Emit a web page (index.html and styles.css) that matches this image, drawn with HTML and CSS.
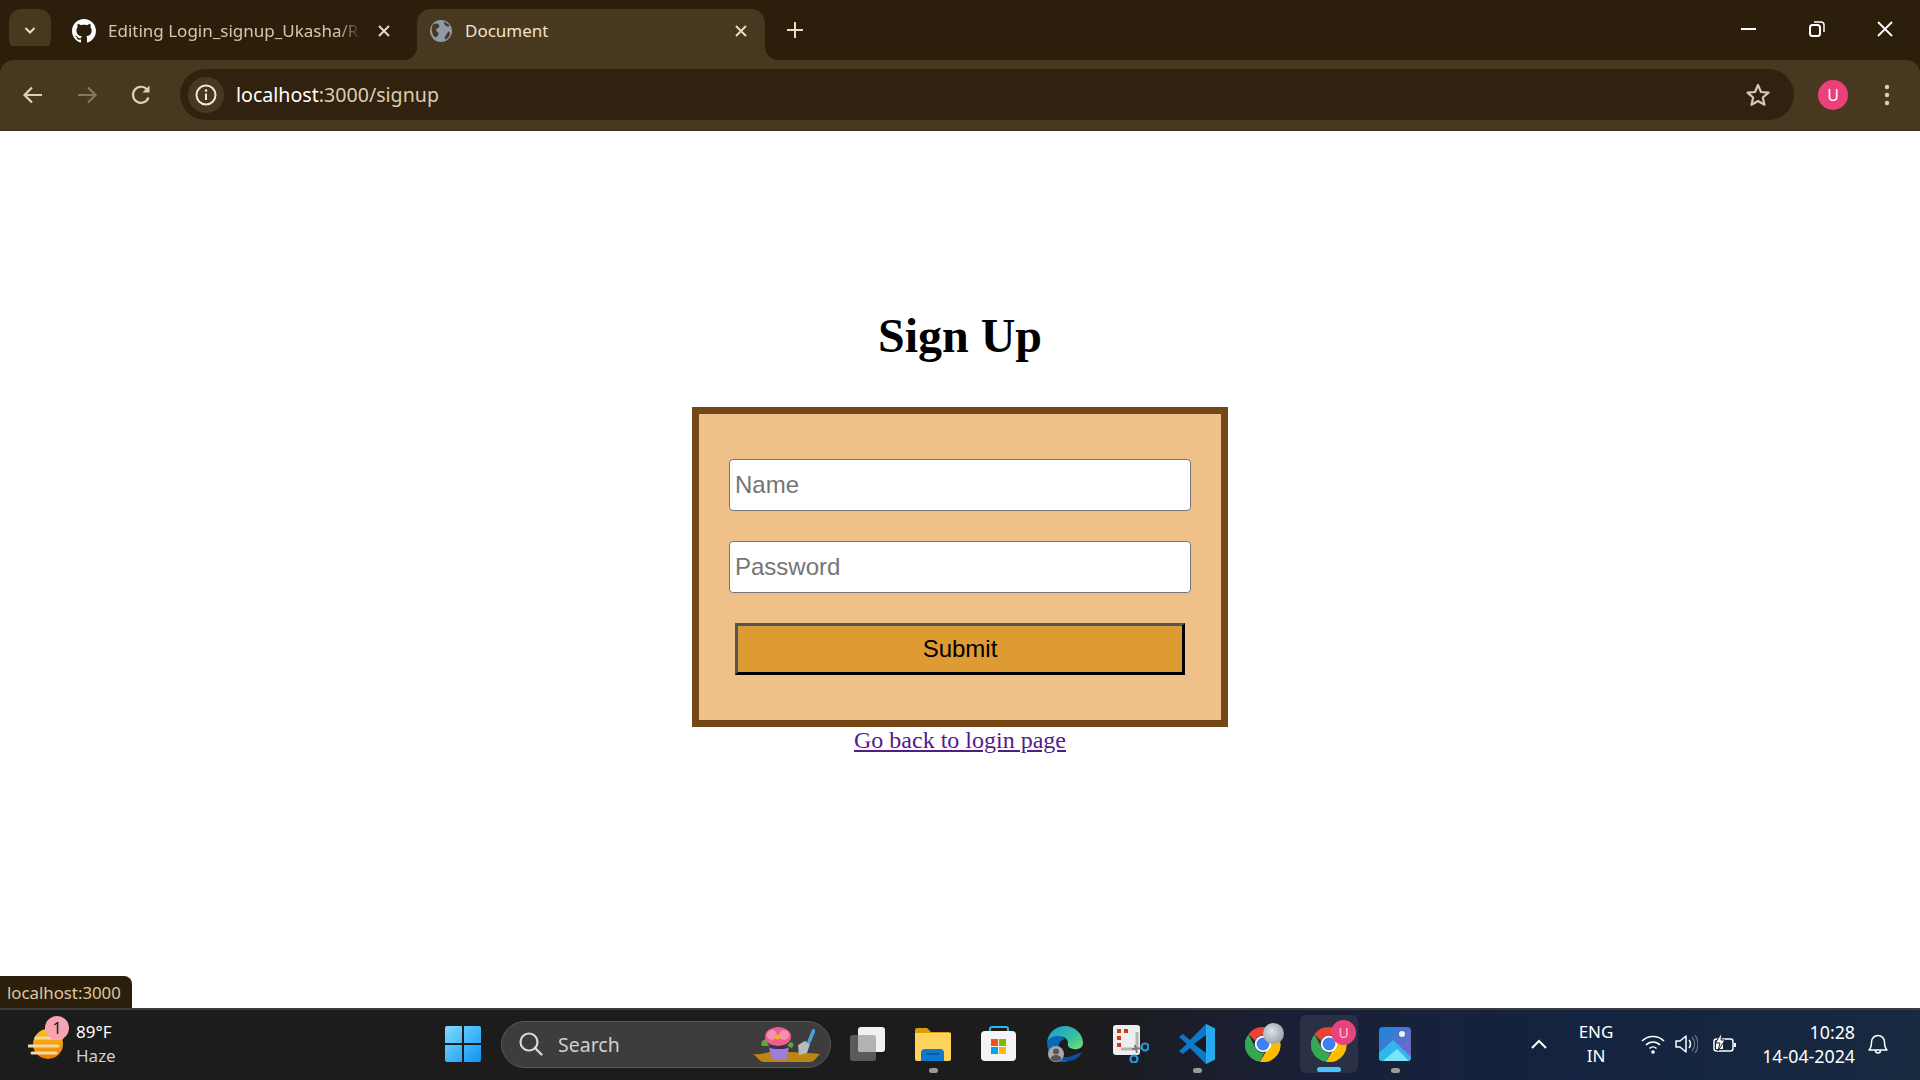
FILE: index.html
```html
<!DOCTYPE html>
<html>

<head>
    <title>Document</title>
    <link rel="stylesheet" href="styles.css">
</head>

<body>
    <svg class="defs" width="0" height="0">
        <defs>
            <symbol id="chrome-logo" viewBox="0 0 36 36">
                <path fill="#ea4335" d="M18 1a17 17 0 0 1 14.7 8.5H18a8.5 8.5 0 0 0-8 5.6L3.6 8.2A17 17 0 0 1 18 1z" />
                <path fill="#34a853" d="M3.6 8.2l7.2 14.3a8.5 8.5 0 0 0 8.6 4l-4.4 9.2A17 17 0 0 1 3.6 8.2z" />
                <path fill="#fbbc04" d="M32.7 9.5A17 17 0 0 1 15 35.7l7.5-13a8.5 8.5 0 0 0-1-11.2z" />
                <circle cx="18" cy="18" r="8.3" fill="#fff" />
                <circle cx="18" cy="18" r="6.4" fill="#3b82f0" />
            </symbol>
        </defs>
    </svg>

    <!-- tab strip -->
    <div class="tabstrip">
        <button class="tab-search">
            <svg width="14" height="14" viewBox="0 0 14 14"><path d="M2.5 5l4.5 4.5L11.500 5" fill="none" stroke="#eadcc2" stroke-width="2" /></svg>
        </button>
        <div class="tab">
            <svg class="tab-icon" viewBox="0 0 16 16"><path fill="#fff" d="M8 0C3.58 0 0 3.58 0 8c0 3.54 2.29 6.53 5.47 7.59.4.07.55-.17.55-.38 0-.19-.01-.82-.01-1.49-2.01.37-2.53-.49-2.69-.94-.09-.23-.48-.94-.82-1.13-.28-.15-.68-.52-.01-.53.63-.01 1.08.58 1.23.82.72 1.21 1.87.87 2.33.66.07-.52.28-.87.51-1.07-1.78-.2-3.64-.89-3.64-3.95 0-.87.31-1.59.82-2.15-.08-.2-.36-1.02.08-2.12 0 0 .67-.21 2.2.82.64-.18 1.32-.27 2-.27.68 0 1.36.09 2 .27 1.53-1.04 2.2-.82 2.2-.82.44 1.1.16 1.92.08 2.12.51.56.82 1.27.82 2.15 0 3.07-1.87 3.75-3.65 3.95.29.25.54.73.54 1.48 0 1.07-.01 1.93-.01 2.2 0 .21.15.46.55.38A8.013 8.013 0 0016 8c0-4.42-3.58-8-8-8z" /></svg>
            <span class="tab-title tab-title-faded">Editing Login_signup_Ukasha/R</span>
            <svg class="tab-close" viewBox="0 0 14 14"><path d="M2 2l10 10M12 2L2 12" stroke="#eadcc2" stroke-width="2" /></svg>
        </div>
        <div class="tab tab-active">
            <svg class="tab-icon" viewBox="0 0 24 24">
                <circle cx="12" cy="12" r="11" fill="#8f9aa6" />
                <path fill="#4a3921" d="M4 5.500c2.500-1.500 5-1 6 .5 1 1.800-.5 3-2 3.500-1.500.5-1 2.500.5 3.500s1.500 3-.5 4.500c-1 .7-1.800 1-2.500.5C3 15 1.500 9 4 5.500zM15 3c2 .5 4.500 2 5.500 4-1.500 1-3.500.5-4.500-1s-1.500-2-1-3zM20 12.500c1 .5 1 2.500.5 4-1 2-2.500 3.500-4 4-1-1-1-3 .5-4.500s1.500-3.500 3-3.500z" />
            </svg>
            <span class="tab-title">Document</span>
            <svg class="tab-close" viewBox="0 0 14 14"><path d="M2 2l10 10M12 2L2 12" stroke="#eadcc2" stroke-width="2" /></svg>
        </div>
        <svg class="new-tab" width="16" height="16" viewBox="0 0 16 16"><path d="M8 0v16M0 8h16" stroke="#eadcc2" stroke-width="2" /></svg>
        <div class="window-controls">
            <button class="window-btn">
                <svg width="16" height="16" viewBox="0 0 16 16"><path d="M0 8h15" stroke="#fff" stroke-width="2" /></svg>
            </button>
            <button class="window-btn">
                <svg width="16" height="16" viewBox="0 0 16 16"><rect x="1" y="4" width="10" height="11" rx="2.500" fill="none" stroke="#fff" stroke-width="2" /><path d="M5 1h6.500A3 3 0 0 1 15 4v7" fill="none" stroke="#fff" stroke-width="1.500" /></svg>
            </button>
            <button class="window-btn">
                <svg width="16" height="16" viewBox="0 0 16 16"><path d="M1 1l14 14M15 1L1 15" stroke="#fff" stroke-width="1.800" /></svg>
            </button>
        </div>
    </div>

    <!-- toolbar -->
    <div class="toolbar">
        <button class="nav-btn">
            <svg width="24" height="24" viewBox="0 0 24 24"><path d="M21 12H4M11 4.500L3.500 12l7.500 7.500" fill="none" stroke="#e0d0b3" stroke-width="2.200" /></svg>
        </button>
        <button class="nav-btn">
            <svg width="24" height="24" viewBox="0 0 24 24"><path d="M3 12h17M13 4.500l7.500 7.500-7.500 7.500" fill="none" stroke="#84775f" stroke-width="2.200" /></svg>
        </button>
        <button class="nav-btn">
            <svg width="24" height="24" viewBox="0 0 24 24"><path d="M19.500 14.500A8 8 0 1 1 18 6.500" fill="none" stroke="#e0d0b3" stroke-width="2.200" /><path d="M20.500 2.500v7h-7z" fill="#e0d0b3" /></svg>
        </button>
        <div class="omnibox">
            <div class="site-info">
                <svg width="22" height="22" viewBox="0 0 22 22"><circle cx="11" cy="11" r="9.500" fill="none" stroke="#f3e8d3" stroke-width="2" /><path d="M11 9.500v6.500" stroke="#f3e8d3" stroke-width="2" /><circle cx="11" cy="6.500" r="1.300" fill="#f3e8d3" /></svg>
            </div>
            <span class="url"><span class="url-host">localhost</span>:3000/signup</span>
            <svg class="star" width="26" height="26" viewBox="0 0 26 26"><path d="M13 3l3 7 7.500.6-5.700 4.900 1.700 7.300L13 19l-6.500 3.800 1.700-7.300L2.500 10.600 10 10z" fill="none" stroke="#d2c8b8" stroke-width="2.200" stroke-linejoin="round" /></svg>
        </div>
        <div class="nav-btn">
            <div class="avatar">U</div>
        </div>
        <button class="nav-btn">
            <svg width="6" height="24" viewBox="0 0 6 24"><circle cx="3" cy="4" r="2.200" fill="#e0d0b3" /><circle cx="3" cy="12" r="2.200" fill="#e0d0b3" /><circle cx="3" cy="20" r="2.200" fill="#e0d0b3" /></svg>
        </button>
    </div>

    <!-- page -->
    <main class="page">
        <h1 class="page-title">Sign Up</h1>
        <form class="signup-form">
            <input class="field" type="text" placeholder="Name">
            <input class="field" type="password" placeholder="Password">
            <input class="submit-btn" type="submit" value="Submit">
        </form>
        <a class="back-link" href="#">Go back to login page</a>
        <div class="status-bubble">localhost:3000</div>
    </main>

    <!-- taskbar -->
    <footer class="taskbar">
        <div class="weather">
            <div class="weather-icon">
                <svg width="40" height="34" viewBox="0 0 40 34">
                    <defs><linearGradient id="sun" x1="0" y1="0" x2="0" y2="1"><stop offset="0" stop-color="#fcc419" /><stop offset="1" stop-color="#ee7a05" /></linearGradient></defs>
                    <circle cx="20" cy="17" r="15" fill="url(#sun)" />
                    <path d="M8 11h26M0 19h30M4 26h24" stroke="#f3d9a0" stroke-width="3" stroke-linecap="round" />
                </svg>
                <span class="weather-badge">1</span>
            </div>
            <div class="weather-text">
                <span class="weather-temp">89°F</span>
                <span class="weather-desc">Haze</span>
            </div>
        </div>

        <div class="task-icons">
            <div class="task-item task-start">
                <svg width="36" height="36" viewBox="0 0 36 36">
                    <defs><linearGradient id="win" x1="0" y1="0" x2="1" y2="1"><stop offset="0" stop-color="#7fdcff" /><stop offset="1" stop-color="#0d93f5" /></linearGradient></defs>
                    <path fill="url(#win)" d="M2 0h15v17H0V2a2 2 0 0 1 2-2zM19 0h15a2 2 0 0 1 2 2v15H19zM0 19h17v17H2a2 2 0 0 1-2-2zM19 19h17v15a2 2 0 0 1-2 2H19z" />
                </svg>
            </div>
            <div class="search-box">
                <svg width="26" height="26" viewBox="0 0 26 26"><circle cx="11" cy="11" r="8.500" fill="none" stroke="#d8d8d8" stroke-width="2.200" /><path d="M17 17l6.500 6.500" stroke="#d8d8d8" stroke-width="2.400" stroke-linecap="round" /></svg>
                <span class="search-label">Search</span>
                <svg class="search-art" width="68" height="35" viewBox="0 0 68 35">
                    <path d="M0 27c7 1 12-1 16-2h20c10 0 20 1 31 2-3 3-6 8-10 8H11C7 35 4 30 0 27z" fill="#bb8614" />
                    <path d="M45 18l7-4 5 3-3 9-8 2z" fill="#b7bcc0" />
                    <path d="M54 15l5-12c1-2 4-1 3 2l-5 12z" fill="#4aa3e0" />
                    <path d="M9 19c-2-4 1-6 4-7l3 7zM37 15c3 0 5 2 2 6l-5-2z" fill="#58a83a" />
                    <path d="M16 20h20l-2.500 13H19z" fill="#a07bd8" />
                    <ellipse cx="26" cy="20" rx="10" ry="2" fill="#3c2d52" />
                    <ellipse cx="25" cy="9.500" rx="13" ry="9.500" fill="#ee5f8e" />
                    <circle cx="19" cy="8" r="5" fill="#f68fb0" />
                    <circle cx="31" cy="8" r="5" fill="#f68fb0" />
                    <circle cx="25" cy="10" r="2.500" fill="#f3b21b" />
                </svg>
            </div>
            <div class="task-list">
                <div class="task-item">
                    <svg width="36" height="36" viewBox="0 0 36 36">
                        <rect x="1" y="9" width="26" height="26" rx="3" fill="#5b5b5b" />
                        <rect x="9" y="1" width="27" height="25" rx="3" fill="#f1f1f1" />
                        <path d="M9 9h15a3 3 0 0 1 3 3v14H12a3 3 0 0 1-3-3z" fill="#b2b2b2" />
                    </svg>
                </div>
                <div class="task-item task-open">
                    <svg width="36" height="34" viewBox="0 0 36 34">
                        <path d="M0 3a2 2 0 0 1 2-2h10l4 4h18a2 2 0 0 1 2 2v6H0z" fill="#d79f0a" />
                        <path d="M0 6h36v26a2 2 0 0 1-2 2H2a2 2 0 0 1-2-2z" fill="#fdd35e" />
                        <path d="M6 34v-8a4 4 0 0 1 4-4h15a4 4 0 0 1 4 4v8z" fill="#0c78d0" />
                        <path d="M11 27h13" stroke="#0a4f92" stroke-width="1.500" />
                    </svg>
                </div>
                <div class="task-item">
                    <svg width="36" height="36" viewBox="0 0 36 36">
                        <path d="M9 6V3a2 2 0 0 1 2-2h14a2 2 0 0 1 2 2v3" fill="none" stroke="#29b6f0" stroke-width="2" />
                        <rect x="0" y="5" width="35" height="30" rx="4" fill="#f4f4f4" />
                        <rect x="10" y="13" width="7" height="7" fill="#e8531f" />
                        <rect x="18" y="13" width="7" height="7" fill="#7fb900" />
                        <rect x="10" y="21" width="7" height="7" fill="#00a2ed" />
                        <rect x="18" y="21" width="7" height="7" fill="#ffb900" />
                    </svg>
                </div>
                <div class="task-item">
                    <svg width="36" height="36" viewBox="0 0 36 36">
                        <defs><linearGradient id="edge" x1="0" y1="0" x2="1" y2="1"><stop offset="0" stop-color="#1b9ad8" /><stop offset="0.6" stop-color="#35c1a0" /><stop offset="1" stop-color="#7fe06a" /></linearGradient></defs>
                        <path d="M0 16C2 5 10 0 18 0c10 0 18 8 18 17 0 5-5 7-10 6-4-1-6-3-5-6 0-4-4-7-9-6S1 13 0 16z" fill="url(#edge)" />
                        <path d="M0 16c2-4 6-6 10-6 3 0 6 1 8 3-5 1-7 5-6 10 0 5 4 10 10 12-3 1-5 1-7 1C7 36 0 27 0 16z" fill="#0b66b8" />
                        <path d="M35 26c-3 6-8 9-13 9-4 0-7-2-9-5 5 2 10 1 14-1 3-1 6-2 8-3z" fill="#0a4f9c" />
                        <circle cx="9" cy="28" r="8" fill="#a8a8a8" />
                        <circle cx="9" cy="25.500" r="3" fill="#555" />
                        <path d="M3.500 33c1-3 3-4 5.500-4s4.500 1 5.500 4a8 8 0 0 1-11 0z" fill="#555" />
                    </svg>
                </div>
                <div class="task-item">
                    <svg width="36" height="38" viewBox="0 0 36 38">
                        <rect x="0" y="0" width="27" height="30" rx="3" fill="#eeeeee" />
                        <rect x="4" y="4" width="4" height="4" fill="#cf3a13" />
                        <rect x="11" y="4" width="4" height="4" fill="#cf3a13" />
                        <rect x="4" y="11" width="4" height="4" fill="#cf3a13" />
                        <rect x="4" y="18" width="4" height="4" fill="#cf3a13" />
                        <path d="M8 24h13a3 3 0 0 0 3-3V7" fill="none" stroke="#b4b4b4" stroke-width="3" />
                        <path d="M22 20l2 8M19 24l11-1" stroke="#777" stroke-width="2" />
                        <circle cx="21" cy="34" r="3.500" fill="none" stroke="#2996d8" stroke-width="2.200" />
                        <circle cx="32" cy="22" r="3.500" fill="none" stroke="#2996d8" stroke-width="2.200" />
                    </svg>
                </div>
                <div class="task-item task-open">
                    <svg width="36" height="40" viewBox="0 0 36 40">
                        <path d="M27 0l9 4.500v31L27 40 11 24l-7 6-4-3 8-7-8-7 4-3 7 6z" fill="#0c78c8" />
                        <path d="M27 0l9 4.500v31L27 40z" fill="#29a8ee" />
                        <path d="M27 11L15 20l12 9z" fill="#1a1a1a" />
                    </svg>
                </div>
                <div class="task-item">
                    <div class="chrome-wrap">
                        <svg class="chrome" viewBox="0 0 36 36"><use href="#chrome-logo" /></svg>
                        <span class="chrome-badge chrome-badge-grey"></span>
                    </div>
                </div>
                <div class="task-item task-active">
                    <div class="chrome-wrap">
                        <svg class="chrome" viewBox="0 0 36 36"><use href="#chrome-logo" /></svg>
                        <span class="chrome-badge">U</span>
                    </div>
                </div>
                <div class="task-item task-open">
                    <svg width="32" height="34" viewBox="0 0 32 34">
                        <defs><linearGradient id="photo" x1="0" y1="0" x2="1" y2="1"><stop offset="0" stop-color="#1388dc" /><stop offset="1" stop-color="#8a5fc4" /></linearGradient></defs>
                        <rect width="32" height="34" rx="4" fill="url(#photo)" />
                        <circle cx="23" cy="7" r="3" fill="#f1f1f1" />
                        <path d="M0 26l14-13 18 17v1a3 3 0 0 1-3 3H3a3 3 0 0 1-3-3z" fill="#2fb8ee" />
                        <path d="M4 34l14-12 12 12z" fill="#7be4f7" />
                    </svg>
                </div>
            </div>
        </div>

        <div class="tray">
            <svg class="tray-icon" viewBox="0 0 24 24"><path d="M5 16l7-7 7 7" fill="none" stroke="#fff" stroke-width="2" /></svg>
            <div class="tray-lang"><span>ENG</span><span>IN</span></div>
            <svg class="tray-icon tray-wifi" viewBox="0 0 24 24"><path d="M1 9c6-6 16-6 22 0M5 13c4-4 10-4 14 0M8.500 16.500c2-2 5-2 7 0" fill="none" stroke="#fff" stroke-width="1.600" /><circle cx="12" cy="20" r="1.800" fill="#fff" /></svg>
            <svg class="tray-icon tray-volume" viewBox="0 0 24 24"><path d="M2 9h4l6-5v16l-6-5H2z" fill="none" stroke="#fff" stroke-width="1.500" stroke-linejoin="round" /><path d="M15 8c2 2 2 6 0 8" fill="none" stroke="#fff" stroke-width="1.500" /><path d="M18 5c3.500 4 3.500 10 0 14M21 3c4 5 4 13 0 18" fill="none" stroke="#6d7688" stroke-width="1.200" /></svg>
            <svg class="tray-icon tray-battery" viewBox="0 0 24 24"><rect x="1" y="7" width="19" height="12" rx="2.500" fill="none" stroke="#fff" stroke-width="1.500" /><path d="M22 11v4" stroke="#fff" stroke-width="2" /><rect x="3" y="9" width="7" height="8" fill="#fff" /><path d="M9 0L2.500 11H7l-2 8 7-11H8z" fill="#fff" stroke="#16243c" /></svg>
            <div class="clock"><span>10:28</span><span>14-04-2024</span></div>
            <svg class="tray-icon tray-bell" viewBox="0 0 24 24"><path d="M3 18c2-2 2.500-4 2.500-8a6.500 6.500 0 0 1 13 0c0 4 .5 6 2.500 8zM9.500 18.500a2.500 2.500 0 0 0 5 0" fill="none" stroke="#fff" stroke-width="1.500" stroke-linejoin="round" /></svg>
        </div>
    </footer>
</body>

</html>
```

FILE: styles.css
```css
* {
    box-sizing: border-box;
}

body {
    margin: 0;
    padding: 0;
    height: 100vh;
    display: flex;
    flex-direction: column;
    overflow: hidden;
    background-color: #fff;
    font-family: "Noto Sans", "Open Sans", sans-serif;
}

button {
    padding: 0;
    border: none;
    background: none;
    display: flex;
    align-items: center;
    justify-content: center;
}

.defs {
    position: absolute;
}

/* tab strip */
.tabstrip {
    height: 60px;
    flex: none;
    display: flex;
    align-items: flex-end;
    padding-left: 9px;
    background-color: #2b1e0a;
}

.tab-search {
    width: 42px;
    height: 42px;
    margin: 0 9px 9px 0;
    border-radius: 12px;
    background-color: #493820;
}

.tab {
    position: relative;
    width: 348px;
    height: 51px;
    margin-right: 9px;
    padding: 0 17px 8px 12px;
    display: flex;
    align-items: center;
    border-radius: 14px 14px 0 0;
}

.tab-active {
    background-color: #493820;
}

.tab-active::before,
.tab-active::after {
    content: "";
    position: absolute;
    bottom: 0;
    width: 14px;
    height: 14px;
}

.tab-active::before {
    left: -14px;
    background: radial-gradient(circle at 0 0, transparent 14px, #493820 14.5px);
}

.tab-active::after {
    right: -14px;
    background: radial-gradient(circle at 100% 0, transparent 14px, #493820 14.5px);
}

.tab-icon {
    width: 24px;
    height: 24px;
    flex: none;
    margin-right: 12px;
}

.tab-title {
    flex: 1;
    min-width: 0;
    white-space: nowrap;
    font-size: 17px;
    color: #efe3cc;
}

.tab-title-faded {
    color: #d6c7ac;
    -webkit-mask-image: linear-gradient(90deg, #000 92%, rgba(0, 0, 0, 0.15) 100%);
    mask-image: linear-gradient(90deg, #000 92%, rgba(0, 0, 0, 0.15) 100%);
}

.tab-close {
    width: 14px;
    height: 14px;
    flex: none;
    margin-left: 19px;
}

.new-tab {
    margin: 0 0 22px 13px;
}

.window-controls {
    margin-left: auto;
    padding-right: 1px;
    align-self: stretch;
    display: flex;
}

.window-btn {
    width: 68px;
    height: 58px;
}

/* toolbar */
.toolbar {
    height: 71px;
    flex: none;
    display: flex;
    align-items: center;
    padding: 0 6px;
    background-color: #493820;
    border-bottom: 2px solid #3e3423;
    border-radius: 14px 14px 0 0;
    box-shadow: 0 -14px 0 #2b1e0a;
}

.nav-btn {
    width: 54px;
    height: 51px;
    flex: none;
    display: flex;
    align-items: center;
    justify-content: center;
}

.omnibox {
    flex: 1;
    height: 51px;
    margin: 0 12px;
    padding: 0 23px 0 8px;
    display: flex;
    align-items: center;
    border-radius: 26px;
    background-color: #30220e;
}

.site-info {
    width: 36px;
    height: 36px;
    margin-right: 12px;
    display: flex;
    align-items: center;
    justify-content: center;
    border-radius: 50%;
    background-color: #493820;
}

.url {
    font-size: 19.600px;
    color: #dccdb1;
}

.url-host {
    color: #fff;
}

.star {
    margin-left: auto;
}

.avatar {
    width: 30px;
    height: 30px;
    display: flex;
    align-items: center;
    justify-content: center;
    border-radius: 50%;
    background-color: #ec407a;
    color: #fff;
    font-size: 16px;
}

/* page */
.page {
    flex: 1;
    position: relative;
    display: flex;
    flex-direction: column;
    align-items: center;
    background-color: #fff;
    font-family: "Liberation Serif", "Times New Roman", serif;
}

.page-title {
    margin: 177px 0 44px;
    font-size: 48px;
    line-height: 55px;
    font-weight: bold;
    color: #000;
}

.signup-form {
    width: 536px;
    height: 320px;
    display: flex;
    flex-direction: column;
    align-items: center;
    gap: 30px;
    padding-top: 45px;
    border: 7px solid #744816;
    background-color: #efc08a;
}

.field {
    width: 462px;
    height: 52px;
    flex: none;
    padding: 0 5px;
    border: 1px solid #767676;
    border-radius: 4px;
    background-color: #fff;
    font-family: "Liberation Sans", Arial, sans-serif;
    font-size: 24px;
}

.field::placeholder {
    color: #757575;
    opacity: 1;
}

.submit-btn {
    width: 450px;
    height: 52px;
    flex: none;
    padding: 0;
    border: 3px outset #000;
    border-color: #555 #000 #000 #555;
    background-color: #de9a33;
    color: #000;
    font-family: "Liberation Sans", Arial, sans-serif;
    font-size: 24px;
}

.back-link {
    font-size: 24px;
    line-height: 27px;
    color: #551a8b;
}

.status-bubble {
    position: absolute;
    left: 0;
    bottom: 0;
    height: 32px;
    padding: 0 11px 0 7px;
    display: flex;
    align-items: center;
    border-radius: 0 8px 0 0;
    background-color: #2b1e0a;
    color: #dcc79f;
    font-family: "Noto Sans", "Open Sans", sans-serif;
    font-size: 16.800px;
}

/* taskbar */
.taskbar {
    height: 72px;
    flex: none;
    display: flex;
    align-items: center;
    padding-bottom: 2px;
    border-top: 2px solid #3c3c3c;
    background: linear-gradient(90deg, #1c1c1c 0, #1c1c1c 56%, #1a2038 68%, #14233f 82%, #172a40 100%);
}

.weather {
    width: 430px;
    flex: none;
    display: flex;
    align-items: center;
    padding-left: 28px;
}

.weather-icon {
    position: relative;
    width: 40px;
    height: 34px;
    margin-right: 8px;
}

.weather-badge {
    position: absolute;
    left: 17px;
    top: -11px;
    width: 24px;
    height: 24px;
    display: flex;
    align-items: center;
    justify-content: center;
    border-radius: 50%;
    background-color: #f7a3b0;
    color: #222;
    font-size: 16px;
}

.weather-text {
    display: flex;
    flex-direction: column;
    line-height: 24px;
    font-size: 17px;
}

.weather-temp {
    color: #fff;
}

.weather-desc {
    color: #cfcfcf;
}

.task-icons {
    display: flex;
    align-items: center;
}

.task-item {
    position: relative;
    width: 66px;
    height: 58px;
    flex: none;
    display: flex;
    align-items: center;
    justify-content: center;
}

.task-open::after {
    content: "";
    position: absolute;
    left: 29px;
    bottom: 0;
    width: 9px;
    height: 5px;
    border-radius: 3px;
    background-color: #9a9a9a;
}

.task-active {
    width: 58px;
    margin: 0 4px;
    border-radius: 6px;
    background-color: #2b3145;
}

.task-active::after {
    content: "";
    position: absolute;
    left: 17px;
    bottom: 1px;
    width: 24px;
    height: 5px;
    border-radius: 3px;
    background-color: #4cc2ff;
}

.search-box {
    width: 330px;
    height: 47px;
    margin-left: 5px;
    margin-right: 3px;
    padding: 0 9px 0 16px;
    display: flex;
    align-items: center;
    border: 1.500px solid #5a5a5a;
    border-radius: 24px;
    background-color: #3d3d3d;
}

.search-label {
    margin-left: 14px;
    color: #d0d0d0;
    font-size: 19.500px;
}

.search-art {
    margin-left: auto;
}

.task-list {
    display: flex;
    align-items: center;
}

.chrome-wrap {
    position: relative;
    width: 36px;
    height: 36px;
}

.chrome {
    width: 36px;
    height: 36px;
    display: block;
}

.chrome-badge {
    position: absolute;
    right: -9px;
    top: -6px;
    width: 25px;
    height: 25px;
    display: flex;
    align-items: center;
    justify-content: center;
    border-radius: 50%;
    background-color: #e8437c;
    color: #f7c9d7;
    font-size: 14px;
}

.chrome-badge-grey {
    right: -3px;
    top: -3px;
    width: 21px;
    height: 21px;
    background: radial-gradient(circle at 40% 40%, #dfe4ea, #818a96);
}

.tray {
    margin-left: auto;
    padding-right: 30px;
    display: flex;
    align-items: center;
    color: #fff;
}

.tray-icon {
    width: 24px;
    height: 24px;
    flex: none;
}

.tray-lang {
    width: 50px;
    margin: 0 20px;
    display: flex;
    flex-direction: column;
    align-items: center;
    font-size: 17px;
    line-height: 24px;
}

.tray-volume {
    margin-left: 9px;
}

.tray-battery {
    margin-left: 15px;
    margin-right: 17px;
}

.clock {
    width: 101px;
    display: flex;
    flex-direction: column;
    align-items: flex-end;
    font-size: 17.800px;
    line-height: 24px;
}

.tray-bell {
    margin-left: 11px;
}
```
